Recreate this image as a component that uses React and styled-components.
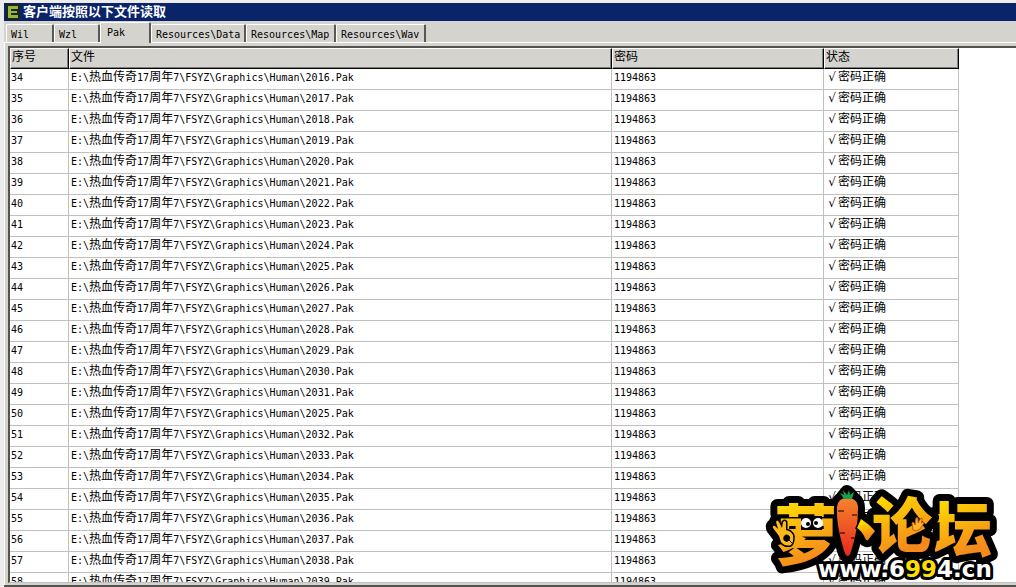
import React, { useState } from 'react'
import styled, { createGlobalStyle } from 'styled-components';

const GlobalStyle = createGlobalStyle`
  * {
    box-sizing: border-box;
  }

  body {
    margin: 0;
    background: #ececec;
    color: #000;
    font-family: "DejaVu Sans Mono", "Noto Sans CJK SC", monospace;
    font-size: 10px;
  }
`
const Window = styled.main`
  height: 100vh;
  padding: 3px 0 0 4px;
  display: flex;
  flex-direction: column;
`
const TitleBar = styled.header`
  height: 18px;
  flex: none;
  padding-left: 2px;
  display: flex;
  align-items: center;
  gap: 3px;
  background: #0a246a;
  color: #fff;

  h1 {
    margin: 0;
    font-size: 13px;
    line-height: 18px;
    font-weight: bold;
  }
`
const Client = styled.div`
  flex: 1;
  min-height: 0;
  display: flex;
  flex-direction: column;
  background: #d5d3ce;
  border-bottom: 2px solid #55534f;
`
const TabList = styled.div`
  height: 21px;
  flex: none;
  padding-left: 2px;
  display: flex;
  align-items: flex-end;
`
const Tab = styled.button`
  width: ${({ $width }) => $width}px;
  height: ${({ $active }) => ($active ? '21px' : '18px')};
  padding: ${({ $active }) => ($active ? '0 0 2px 6px' : '1px 0 0 4px')};
  margin-bottom: ${({ $active }) => ($active ? '-1px' : '0')};
  position: relative;
  z-index: ${({ $active }) => ($active ? 1 : 0)};
  border: 0;
  border-top: 1px solid #fff;
  border-left: 1px solid #fff;
  border-right: 2px solid #5a5854;
  border-radius: 2px 2px 0 0;
  background: #d5d3ce;
  color: #000;
  font: inherit;
  text-align: left;
  white-space: nowrap;
`
const Page = styled.section`
  flex: 1;
  min-height: 0;
  padding: 3px 0 2px 3px;
  display: flex;
  border-top: 1px solid #fff;
  border-left: 1px solid #fff;
`
const GridView = styled.div`
  flex: 1;
  overflow: hidden;
  background: #fff;
  border-top: 2px solid #55534f;
  border-left: 2px solid #55534f;
  border-bottom: 1px solid #c0c0c0;
`
const Table = styled.table`
  width: calc(100% - 57px);
  table-layout: fixed;
  border-collapse: separate;
  border-spacing: 0;
`
const HeadCell = styled.th`
  width: ${({ $width }) => $width};
  height: 21px;
  padding: 0 0 0 1px;
  background: #d5d3ce;
  border-top: 1px solid #fff;
  border-left: 1px solid #fff;
  border-right: 1px solid #000;
  border-bottom: 1px solid #000;
  box-shadow: inset -1px -1px 0 #808080;
  font-weight: normal;
  font-size: 12px;
  line-height: 16px;
  text-align: left;
  vertical-align: top;
`
const Cell = styled.td`
  height: 21px;
  padding: 0 0 0 2px;
  border-right: 1px solid #c0c0c0;
  border-bottom: 1px solid #c0c0c0;
  line-height: 18px;
  vertical-align: top;
  white-space: nowrap;

  &:first-child {
    padding-left: 1px;
  }
`
const Han = styled.span`
  font-family: "Noto Sans CJK SC", sans-serif;
  font-size: 12px;
  line-height: 0;
`
const Check = styled.span`
  display: inline-block;
  width: 12px;
  font-family: "DejaVu Sans", sans-serif;
  font-size: 12px;
  line-height: 0;
  text-align: center;
`
const Logo = styled.svg`
  position: absolute;
  right: 13px;
  bottom: 4px;
  width: 240px;
  height: 100px;
  overflow: visible;
`

const tabs = [
  { label: 'Wil', width: 48 },
  { label: 'Wzl', width: 46 },
  { label: 'Pak', width: 51 },
  { label: 'Resources\\Data', width: 95 },
  { label: 'Resources\\Map', width: 90 },
  { label: 'Resources\\Wav', width: 90 },
]

const files = [
  2016, 2017, 2018, 2019, 2020, 2021, 2022, 2023, 2024, 2025, 2026, 2027, 2028,
  2029, 2030, 2031, 2025, 2032, 2033, 2034, 2035, 2036, 2037, 2038, 2039,
]

// Chinese runs are two columns wide, latin runs one column per letter
const Mixed = ({ text }) =>
  text.split(/([\u4e00-\u9fff]+)/).map((part, i) =>
    i % 2 ? <Han key={i}>{part}</Han> : part
  )

const AppIcon = () => (
  <svg width="14" height="16" viewBox="0 0 14 16" aria-hidden="true">
    <rect width="14" height="16" fill="#20241c" />
    <path d="M2 2h10v3H5v2h6v2H5v2h7v3H2z" fill="#93b83c" />
  </svg>
)

const carrotShape = 'M74 24q1-9 10-9 11 0 11 10 0 22-6 40-2 8-4 8-3 0-5-9-7-24-6-40z'
const wedgeShape = 'M98 36q8 5 14 12l-7 9q-2 1-3-2-3-7-8-10z'
const handShape =
  'M16 53l-6-8q-1-3 2-2l3 3-2-7q1-3 3 0l3 6 1-6q2-2 3 0v8q5 1 7 5 1 7-2 10-6 2-10-3z'

const ForumLogo = () => (
  <Logo viewBox="0 0 240 100" role="img" aria-label="萝卜论坛 www.6994.cn">
    <defs>
      <linearGradient id="gold" x1="0" y1="0" x2="0.3" y2="1">
        <stop offset="0.2" stopColor="#ffdf00" />
        <stop offset="0.9" stopColor="#f58a1c" />
      </linearGradient>
      <linearGradient id="carrot" x1="0" y1="0" x2="0" y2="1">
        <stop offset="0" stopColor="#f5842a" />
        <stop offset="1" stopColor="#e8281e" />
      </linearGradient>
    </defs>
    <g stroke="#000" strokeWidth="14" strokeLinejoin="round">
      <path d={carrotShape} />
      <path d="M80 14l4-5 5 5z" />
      <path d={wedgeShape} />
      <path d={handShape} />
    </g>
    <g
      fontFamily='"Noto Sans CJK SC", sans-serif'
      fontWeight="900"
      fill="url(#gold)"
      stroke="#000"
      strokeWidth="14"
      strokeLinejoin="round"
      paintOrder="stroke"
    >
      <text x="11" y="76" fontSize="65">萝</text>
      <text x="169" y="69" fontSize="60">坛</text>
      <text x="109" y="65" fontSize="60">论</text>
    </g>
    <path d={carrotShape} fill="url(#carrot)" stroke="#000" strokeWidth="6" paintOrder="stroke" />
    <path d={wedgeShape} fill="url(#gold)" stroke="#000" strokeWidth="3" paintOrder="stroke" />
    <path d="M75 28h6M94 32h-5M77 50h5M92 55h-4" stroke="#000" strokeWidth="1" />
    <path d="M81 16l-4-6 4 2-1-5 4 5 2-5 1 5 4-3-2 7z" fill="#18a04c" />
    <path d={handShape} fill="#fcb91c" stroke="#000" strokeWidth="3" paintOrder="stroke" />
    <path d="M21 57q-1-5 3-5 4 1 2 5-2 3-5 0zM25 56l4 4" fill="#000" stroke="#000" />
    <path d="M38 33h21v14H38z" fill="#000" />
    <circle cx="43" cy="40" r="5" fill="#fff" />
    <circle cx="55" cy="40" r="5" fill="#fff" />
    <circle cx="45" cy="41" r="2" fill="#000" />
    <circle cx="53" cy="40" r="2" fill="#000" />
    <path
      d="M150 47l-1-7q1-2 2 0l1 2 1-7q2-1 2 1v4l3-5q2 0 1 2l-1 3q3-2 3 0l-4 6q-3 3-7 1z"
      fill="#ffb52e"
      stroke="#c8590a"
      strokeWidth="1"
    />
    <text
      x="55"
      y="94"
      fontFamily='"DejaVu Sans", sans-serif'
      fontWeight="bold"
      fontSize="23"
      fill="#fff"
      stroke="#000"
      strokeWidth="6"
      strokeLinejoin="round"
      paintOrder="stroke"
    >
      www.6<tspan fill="#ffdf00">99</tspan>4.cn
    </text>
  </Logo>
)

const App = () => {
  const [active, setActive] = useState('Pak')

  return (
    <Window>
      <GlobalStyle />
      <TitleBar>
        <AppIcon />
        <h1>客户端按照以下文件读取</h1>
      </TitleBar>
      <Client>
        <TabList role="tablist">
          {tabs.map(({ label, width }) => (
            <Tab
              key={label}
              type="button"
              role="tab"
              aria-selected={active === label}
              $active={active === label}
              $width={width}
              onClick={() => setActive(label)}
            >
              {label}
            </Tab>
          ))}
        </TabList>
        <Page role="tabpanel">
          <GridView>
            <Table>
              <thead>
                <tr>
                  <HeadCell $width="59px">序号</HeadCell>
                  <HeadCell $width="auto">文件</HeadCell>
                  <HeadCell $width="212px">密码</HeadCell>
                  <HeadCell $width="135px">状态</HeadCell>
                </tr>
              </thead>
              <tbody>
                {files.map((file, i) => (
                  <tr key={i}>
                    <Cell>{i + 34}</Cell>
                    <Cell>
                      <Mixed text={`E:\\热血传奇17周年7\\FSYZ\\Graphics\\Human\\${file}.Pak`} />
                    </Cell>
                    <Cell>1194863</Cell>
                    <Cell>
                      <Check>√</Check>
                      <Han>密码正确</Han>
                    </Cell>
                  </tr>
                ))}
              </tbody>
            </Table>
          </GridView>
        </Page>
      </Client>
      <ForumLogo />
    </Window>
  )
}

export default App
